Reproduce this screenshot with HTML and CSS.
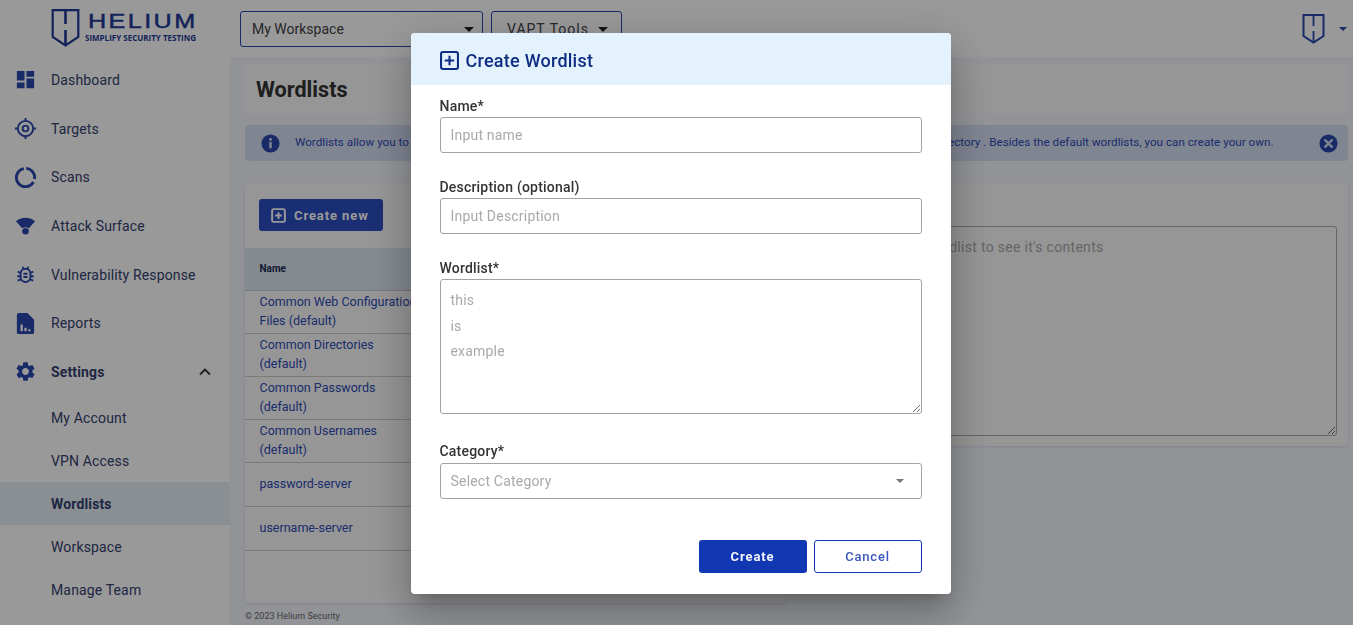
FILE: index.html
```html
<!DOCTYPE html>
<html>
<head>
    <title>Wordlists - Helium</title>
    <link rel="stylesheet" href="styles.css">
</head>
<body>
    <div class="app">
        <header class="topbar">
            <div class="logo">
                <svg class="logo-shield" viewBox="0 0 28 38" fill="none" stroke="currentColor">
                    <path d="M1.200 1.200H26.800V28L14 36.400 1.200 28Z" stroke-width="2.200"/>
                    <path d="M14 1.200V15M14 21V36" stroke-width="2.600"/>
                </svg>
                <div class="logo-text">
                    <span class="logo-name">HELIUM</span>
                    <span class="logo-tag">SIMPLIFY SECURITY TESTING</span>
                </div>
            </div>
            <div class="picker picker-workspace">
                <span>My Workspace</span>
                <i class="caret"></i>
            </div>
            <div class="picker picker-tools">
                <span>VAPT Tools</span>
                <i class="caret"></i>
            </div>
            <div class="account">
                <svg class="account-shield" viewBox="0 0 22 30" fill="none" stroke="currentColor">
                    <path d="M1 1H21V22L11 28.600 1 22Z" stroke-width="2"/>
                    <path d="M11 1V12M11 17V28" stroke-width="1.800"/>
                </svg>
                <i class="caret caret-blue"></i>
            </div>
        </header>

        <div class="body-row">
            <nav class="sidebar">
                <a class="nav-item">
                    <svg class="nav-icon" viewBox="0 0 24 24"><path d="M3 13h8V3H3v10zm0 8h8v-6H3v6zm10 0h8V11h-8v10zm0-18v6h8V3h-8z"/></svg>
                    Dashboard
                </a>
                <a class="nav-item">
                    <svg class="nav-icon" viewBox="0 0 24 24" fill="none" stroke="currentColor" stroke-width="2"><circle cx="12" cy="12" r="8"/><circle cx="12" cy="12" r="3"/><path d="M12 1v3M12 20v3M1 12h3M20 12h3"/></svg>
                    Targets
                </a>
                <a class="nav-item">
                    <svg class="nav-icon" viewBox="0 0 24 24" fill="none" stroke="currentColor" stroke-width="3"><path d="M12.800 2.500A9.500 9.500 0 0 1 21.400 13.500"/><path d="M20.300 16.700A9.500 9.500 0 1 1 10.300 2.700"/></svg>
                    Scans
                </a>
                <a class="nav-item">
                    <svg class="nav-icon" viewBox="0 0 24 24"><path d="M12 4c4 0 7.300 1.300 10 3.500l-6.500 7.300c-1-.6-2.200-.9-3.500-.9s-2.500.3-3.500.9L2 7.500C4.700 5.300 8 4 12 4z"/><circle cx="12" cy="18" r="3.400"/></svg>
                    Attack Surface
                </a>
                <a class="nav-item">
                    <svg class="nav-icon" viewBox="-2 -2 28 28" fill="none" stroke="currentColor" stroke-width="2.400"><rect x="6" y="5" width="12" height="16" rx="6"/><path d="M9 5V2.500M15 5V2.500M2.500 8.500L6 10M21.500 8.500L18 10M2 14h4M18 14h4M2.500 19.500L6.500 18M21.500 19.500L17.500 18M9.500 11h5M9.500 15h5"/></svg>
                    Vulnerability Response
                </a>
                <a class="nav-item">
                    <svg class="nav-icon" viewBox="0 0 24 24"><path fill-rule="evenodd" d="M5 1h9l7 7v13a2 2 0 0 1-2 2H5a2 2 0 0 1-2-2V3a2 2 0 0 1 2-2zm1.800 12v7h2.400v-7zm4 3.500V20h2.400v-3.500zm4 1.500v2h2.400v-2z"/></svg>
                    Reports
                </a>
                <a class="nav-item nav-open">
                    <svg class="nav-icon" viewBox="0 0 24 24"><path d="M19.140 12.940c.04-.3.06-.61.06-.94 0-.32-.02-.64-.07-.94l2.030-1.580c.18-.14.23-.41.12-.61l-1.920-3.320c-.12-.22-.37-.29-.59-.22l-2.390.96c-.5-.38-1.030-.7-1.620-.94l-.36-2.540c-.04-.24-.24-.41-.48-.41h-3.840c-.24 0-.43.17-.47.41l-.36 2.540c-.59.24-1.130.57-1.620.94l-2.390-.96c-.22-.08-.47 0-.59.22L2.740 8.870c-.12.21-.08.47.12.61l2.030 1.580c-.05.3-.09.63-.09.94s.02.64.07.94l-2.030 1.580c-.18.14-.23.41-.12.61l1.920 3.320c.12.22.37.29.59.22l2.390-.96c.5.38 1.030.7 1.620.94l.36 2.540c.05.24.24.41.48.41h3.840c.24 0 .44-.17.47-.41l.36-2.540c.59-.24 1.130-.56 1.620-.94l2.390.96c.22.08.47 0 .59-.22l1.920-3.320c.12-.22.07-.47-.12-.61l-2.010-1.580zM12 15.600c-1.980 0-3.600-1.620-3.600-3.600s1.620-3.600 3.600-3.600 3.600 1.620 3.600 3.600-1.620 3.600-3.600 3.600z"/></svg>
                    Settings
                    <svg class="nav-chevron" viewBox="0 0 12 8" fill="none" stroke="currentColor" stroke-width="1.800"><path d="M1 6.500L6 1.500l5 5"/></svg>
                </a>
                <a class="nav-sub">My Account</a>
                <a class="nav-sub">VPN Access</a>
                <a class="nav-sub nav-active">Wordlists</a>
                <a class="nav-sub">Workspace</a>
                <a class="nav-sub">Manage Team</a>
            </nav>

            <main class="content">
                <div class="title-card"><h1>Wordlists</h1></div>

                <div class="alert">
                    <svg class="alert-icon" viewBox="0 0 20 20"><circle cx="10" cy="10" r="9.500"/><rect class="glyph" x="8.700" y="8.500" width="2.600" height="6.500"/><circle class="glyph" cx="10" cy="5.800" r="1.500"/></svg>
                    <span class="alert-text">Wordlists allow you to configure the words that are used by a scan when it is trying to find hidden files or a hidden website's directory . Besides the default wordlists, you can create your own.</span>
                    <svg class="alert-icon alert-close" viewBox="0 0 20 20"><circle cx="10" cy="10" r="9.500"/><path class="glyph-line" d="M6.500 6.500l7 7M13.500 6.500l-7 7"/></svg>
                </div>

                <div class="panels">
                    <section class="card card-list">
                        <div class="card-actions">
                            <button class="btn-new">
                                <svg class="plus-box" viewBox="0 0 20 20" fill="none" stroke="currentColor" stroke-width="2.600"><rect x="1.500" y="1.500" width="17" height="17" rx="2"/><path d="M10 5.500v9M5.500 10h9"/></svg>
                                Create new
                            </button>
                        </div>
                        <div class="table-head">Name</div>
                        <div class="table-row">Common Web Configuration<br>Files (default)</div>
                        <div class="table-row">Common Directories<br>(default)</div>
                        <div class="table-row">Common Passwords<br>(default)</div>
                        <div class="table-row">Common Usernames<br>(default)</div>
                        <div class="table-row table-row-single">password-server</div>
                        <div class="table-row table-row-single">username-server</div>
                    </section>
                    <section class="card card-view">
                        <textarea class="view-box" placeholder="Please select a wordlist to see it's contents"></textarea>
                    </section>
                </div>
                <footer class="copyright">© 2023 Helium Security</footer>
            </main>
        </div>
    </div>

    <div class="backdrop">
        <div class="modal">
            <div class="modal-head">
                <svg class="plus-box modal-plus" viewBox="0 0 20 20" fill="none" stroke="currentColor" stroke-width="2.200"><rect x="1.100" y="1.100" width="17.800" height="17.800" rx="2"/><path d="M10 5v10M5 10h10"/></svg>
                <h2>Create Wordlist</h2>
            </div>
            <form class="modal-body">
                <div class="field">
                    <label>Name*</label>
                    <input type="text" placeholder="Input name">
                </div>
                <div class="field">
                    <label>Description (optional)</label>
                    <input type="text" placeholder="Input Description">
                </div>
                <div class="field field-area">
                    <label>Wordlist*</label>
                    <textarea placeholder="this&#10;is&#10;example"></textarea>
                </div>
                <div class="field">
                    <label class="label-select">Category*</label>
                    <div class="fake-select">
                        <span>Select Category</span>
                        <i class="caret caret-grey"></i>
                    </div>
                </div>
                <div class="modal-actions">
                    <button type="button" class="btn btn-primary">Create</button>
                    <button type="button" class="btn btn-outline">Cancel</button>
                </div>
            </form>
        </div>
    </div>
</body>
</html>
```

FILE: styles.css
```css
* {
    box-sizing: border-box;
}
html, body {
    height: 100%;
}
body {
    margin: 0;
    overflow: hidden;
    background: #fff;
    font-family: Roboto, "Liberation Sans", sans-serif;
    color: #1f2f6e;
}
.app {
    display: flex;
    flex-direction: column;
    height: 625px;
}

/* top bar */
.topbar {
    display: flex;
    align-items: flex-start;
    height: 57px;
    flex-shrink: 0;
    padding: 11px 6px 0 51px;
}
.logo {
    display: flex;
    gap: 6px;
    width: 189px;
    margin-top: -2px;
    color: #1f3a96;
}
.logo-shield {
    width: 29px;
    height: 38px;
}
.logo-text {
    display: flex;
    flex-direction: column;
    padding-top: 1px;
}
.logo-name {
    display: block;
    font-family: "Liberation Sans", sans-serif;
    font-size: 21px;
    line-height: 22px;
    letter-spacing: 2px;
    margin-left: 2px;
    transform: scaleX(1.2);
    transform-origin: left center;
    -webkit-text-stroke: 0.5px currentColor;
}
.logo-tag {
    font-family: "Open Sans", sans-serif;
    font-size: 8px;
    line-height: 11px;
    font-weight: 700;
    margin-left: -1px;
    white-space: nowrap;
}
.picker {
    display: flex;
    align-items: center;
    justify-content: space-between;
    height: 36px;
    border: 1px solid #2848b0;
    border-radius: 3px;
    font-size: 14px;
    color: #3e4146;
    padding: 0 8px 0 11px;
}
.picker-workspace {
    width: 243px;
    margin-right: 8px;
}
.picker-tools {
    width: 131px;
    padding: 0 13px 0 15px;
    letter-spacing: 1px;
}
.caret {
    display: block;
    width: 0;
    height: 0;
    border-left: 5px solid transparent;
    border-right: 5px solid transparent;
    border-top: 5px solid #222;
}
.caret-blue {
    border-left-width: 4px;
    border-right-width: 4px;
    border-top: 4px solid #2a46ad;
}
.caret-grey {
    border-left-width: 4.5px;
    border-right-width: 4.5px;
    border-top: 4.5px solid #757575;
}
.account {
    display: flex;
    align-items: center;
    gap: 14px;
    margin-left: auto;
    color: #2a46ad;
    height: 32px;
    margin-top: 2px;
}
.account-shield {
    width: 23px;
    height: 30px;
}

.body-row {
    display: flex;
    flex: 1;
    min-height: 0;
}

/* sidebar */
.sidebar {
    width: 230px;
    flex-shrink: 0;
    display: flex;
    flex-direction: column;
}
.nav-item {
    display: flex;
    align-items: center;
    height: 48.67px;
    padding-left: 14px;
    font-size: 14px;
    letter-spacing: 0.15px;
    color: #34426f;
}
.nav-item:first-child {
    margin-top: -1.4px;
}
.nav-icon {
    width: 23px;
    height: 23px;
    margin-right: 14px;
    fill: #2a46ad;
    color: #2a46ad;
    flex-shrink: 0;
}
.nav-icon[fill="none"] {
    fill: none;
}
.nav-open {
    font-weight: 700;
}
.nav-chevron {
    width: 12px;
    height: 8px;
    margin-left: auto;
    margin-right: 19px;
    color: #333;
}
.nav-sub {
    display: flex;
    align-items: center;
    height: 43px;
    padding-left: 51px;
    font-size: 14px;
    letter-spacing: 0.15px;
    color: #34426f;
}
.nav-active {
    background: #e4eff6;
    font-weight: 700;
}

/* main */
.content {
    flex: 1;
    min-width: 0;
    display: flex;
    flex-direction: column;
    background: #f4f6fb;
    padding: 7px 5px 0 15px;
}
.title-card {
    height: 50px;
    background: #fafafa;
    padding-left: 11px;
    display: flex;
    align-items: center;
    margin-bottom: 11px;
}
h1 {
    margin: 0;
    font-size: 21.6px;
    font-weight: 700;
    color: #333;
}
.alert {
    display: flex;
    align-items: center;
    height: 36px;
    background: #d6def4;
    border-radius: 4px;
    padding: 0 10px 0 16px;
    color: #2d4bb5;
    margin-bottom: 22px;
}
.alert-icon {
    width: 19px;
    height: 19px;
    fill: #2a46ad;
    flex-shrink: 0;
}
.alert-close {
    margin-left: auto;
}
.glyph {
    fill: #d6def4;
}
.glyph-line {
    stroke: #d6def4;
    stroke-width: 2.4;
    stroke-linecap: round;
}
.alert-text {
    margin: -2px 0 0 15px;
    font-size: 11.7px;
    white-space: nowrap;
}
.panels {
    display: flex;
    align-items: flex-start;
    gap: 15px;
}
.card {
    background: #fafafa;
    border-radius: 4px;
    box-shadow: 0 1px 3px rgba(80, 100, 180, 0.18);
}
.card-list {
    width: 540px;
    height: 420px;
    flex-shrink: 0;
}
.card-actions {
    height: 65px;
    padding: 16px 14px 0;
}
.btn-new {
    display: flex;
    align-items: center;
    gap: 8px;
    width: 124px;
    height: 32px;
    padding: 0 0 0 12px;
    border: 0;
    border-radius: 3px;
    background: #2b4dc0;
    color: #fff;
    font-family: inherit;
    font-size: 13px;
    font-weight: 700;
    letter-spacing: 0.9px;
}
.plus-box {
    width: 15px;
    height: 15px;
    flex-shrink: 0;
}
.table-head {
    height: 43px;
    background: #dbe6f0;
    padding: 0 0 1px 14.5px;
    display: flex;
    align-items: center;
    font-size: 10px;
    font-weight: 700;
    color: #1f2a55;
    border-bottom: 1px solid #c8c8c8;
}
.table-row {
    height: 43px;
    padding: 1px 14.5px 0;
    font-size: 12.5px;
    line-height: 19px;
    color: #2d4bb5;
    border-bottom: 1px solid #ccc;
    white-space: nowrap;
}
.table-row-single {
    height: 44px;
    display: flex;
    align-items: center;
    padding-bottom: 3px;
}
.card-view {
    flex: 1;
    min-width: 0;
    height: 263px;
    padding: 43px 11px 10px;
}
.view-box {
    display: block;
    width: 100%;
    height: 210px;
    border: 1px solid #aaa;
    border-radius: 3px;
    padding: 12px 11px;
    background: transparent;
    font-family: inherit;
    font-size: 14px;
    letter-spacing: 0.3px;
}
.view-box::placeholder {
    color: #a9a9a9;
}
.copyright {
    margin-top: 7px;
    font-size: 9px;
    line-height: 12px;
    color: #666;
}

/* modal */
.backdrop {
    position: fixed;
    top: 0;
    left: 0;
    right: 0;
    bottom: 0;
    display: flex;
    justify-content: center;
    align-items: flex-start;
    padding: 33px 0 0 8px;
    background: rgba(0, 0, 0, 0.4);
}
.modal {
    width: 540px;
    height: 561px;
    background: #fff;
    border-radius: 4px;
    overflow: hidden;
    box-shadow: 0 11px 15px -7px rgba(0, 0, 0, 0.2), 0 24px 38px 3px rgba(0, 0, 0, 0.14), 0 9px 46px 8px rgba(0, 0, 0, 0.12);
}
.modal-head {
    display: flex;
    align-items: center;
    gap: 7px;
    height: 52px;
    padding: 2px 0 0 29px;
    background: #e3f2fd;
    color: #0f2d82;
}
.modal-plus {
    width: 19px;
    height: 19px;
}
h2 {
    margin: 0;
    font-size: 18px;
    font-weight: 500;
    letter-spacing: 0.25px;
}
.modal-body {
    padding: 13px 29px 0;
    display: block;
}
.field {
    margin-bottom: 26px;
}
.field-area {
    margin-bottom: 29px;
}
label {
    display: block;
    font-size: 14px;
    line-height: 16px;
    font-weight: 500;
    letter-spacing: 0.2px;
    color: #333;
    margin-bottom: 3px;
}
.label-select {
    margin-bottom: 4px;
}
.field input, .field textarea, .fake-select {
    display: block;
    width: 100%;
    height: 36px;
    border: 1px solid #a3a3a3;
    border-radius: 3px;
    padding: 0 10px;
    background: #fff;
    font-family: inherit;
    font-size: 14px;
    letter-spacing: 0.2px;
}
.field textarea {
    height: 135px;
    padding: 8px 10px;
    line-height: 25.5px;
}
.field input::placeholder, .field textarea::placeholder {
    color: #a9a9a9;
    opacity: 1;
}
.fake-select {
    display: flex;
    align-items: center;
    justify-content: space-between;
    color: #a9a9a9;
    padding-right: 17px;
}
.modal-actions {
    display: flex;
    justify-content: flex-end;
    gap: 7px;
    margin-top: 41px;
}
.btn {
    width: 108px;
    height: 33px;
    border-radius: 3px;
    font-family: inherit;
    font-size: 13px;
    font-weight: 700;
    letter-spacing: 0.9px;
}
.btn-primary {
    background: #1237b2;
    border: 0;
    color: #f2f4fb;
}
.btn-outline {
    background: #fff;
    border: 1px solid #1237b2;
    color: #3a56bd;
    font-weight: 500;
    letter-spacing: 0.8px;
}
```
